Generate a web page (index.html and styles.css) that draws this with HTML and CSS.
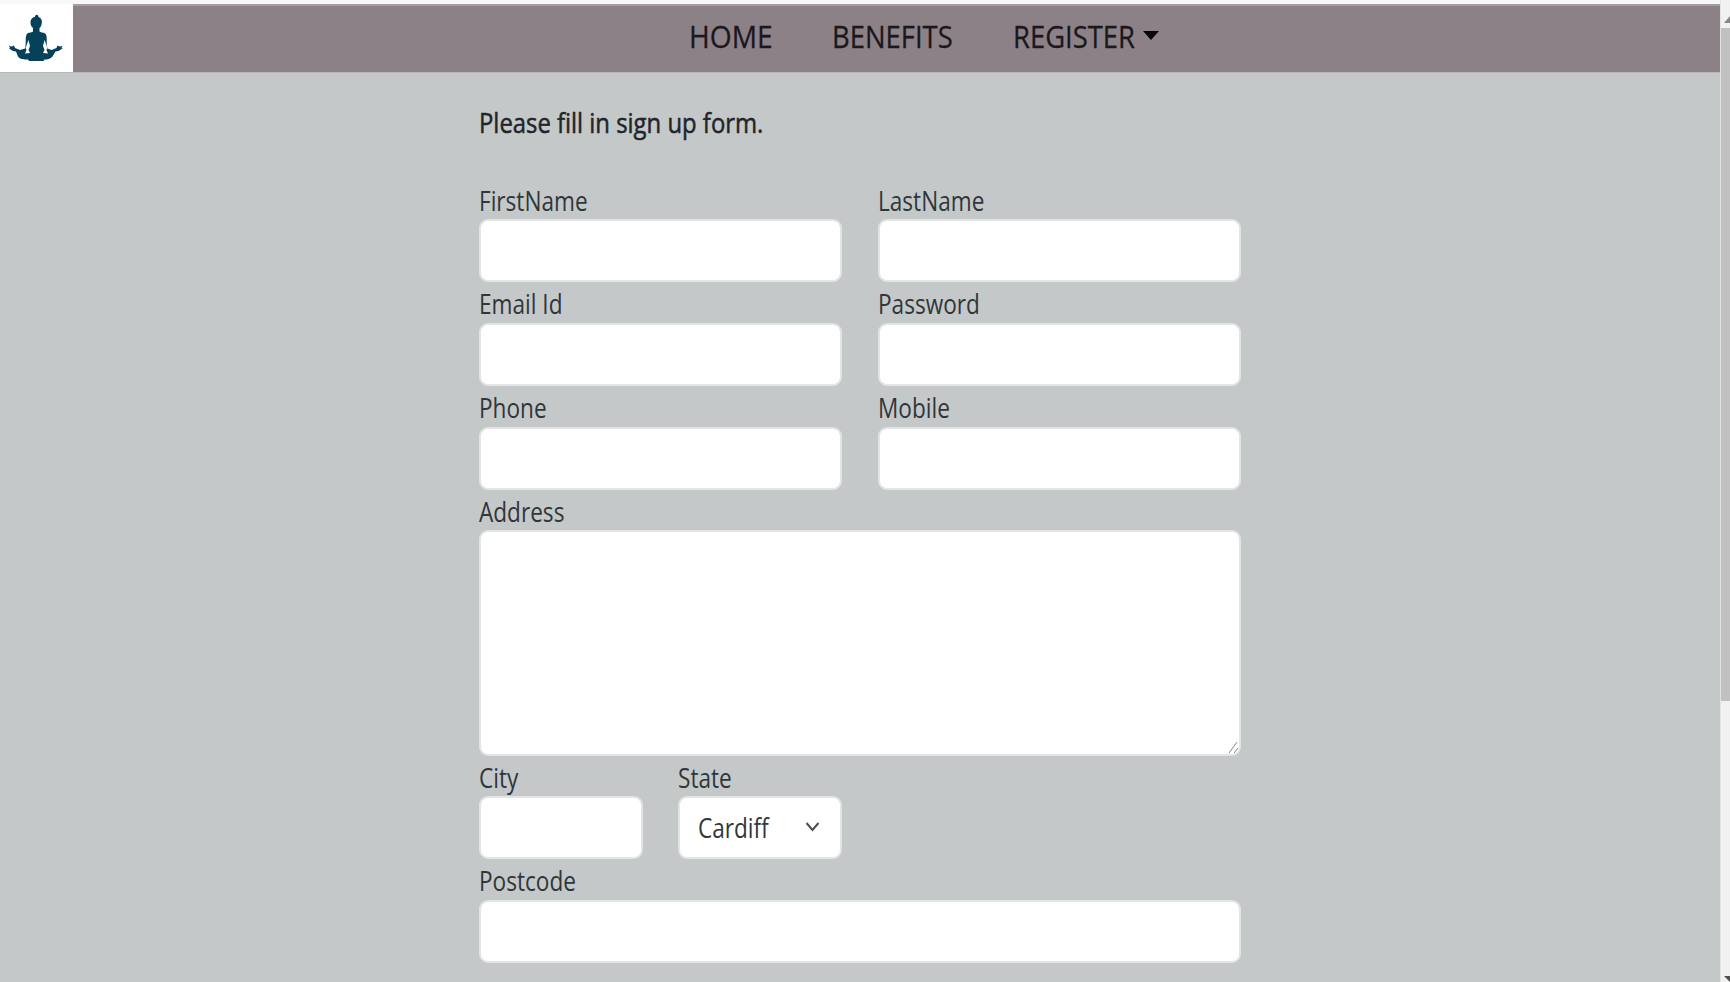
FILE: index.html
```html
<!DOCTYPE html>
<html lang="en">
<head>
<meta charset="utf-8">
<title>Register</title>
<link rel="stylesheet" href="styles.css">
</head>
<body>
<div class="page">
  <header class="navbar">
    <a class="logo"><svg width="73" height="66" viewBox="0 6 73 66" fill="#06415a"><path d="M35 17c0-3 3.500-3 3.500 0 3 1 4 4 3 7.500-.5 2-1 3-2 3.500v3.500c2 1.500 5 .5 6.500 3 1.500 4 0 8 1.500 14l4 1.500 5-2 1-2.500 2 1 3-.5-1 2 1 .5-4 2.500-3 .5-3 5c-2 2.500-5 3-8 3l-1 1.500H29l-1-1.500c-4 0-8 0-10-3l-2-5-3-.5-4-2.500 1-.5-1-2 3 .5 2-1 1 2.500 5 2 5-1.500c1.500-6 0-10 1.500-14 1.500-2.500 4.500-1.500 6.500-3V28c-2-1.500-2.500-3-2.500-6 0-2 1-4 3.500-5z"/><path fill="#fff" d="M28.500 40l1.500 6-1.500 4 1.500 3-5 .5 1.500-3.500-1-2zM44.500 40L43 46l1.500 4-1.500 3 5 .5-1.500-3.500 1-2z"/></svg></a>
    <nav class="links">
      <a class="link home"><span>HOME</span></a>
      <a class="link benefits"><span>BENEFITS</span></a>
      <a class="link register"><span>REGISTER</span><i class="caret"></i></a>
    </nav>
  </header>
  <main class="form">
    <h1 class="title"><span>Please fill in sign up form.</span></h1>
    <label class="field"><span class="label">FirstName</span><input class="box"></label>
    <label class="field"><span class="label">LastName</span><input class="box"></label>
    <label class="field"><span class="label">Email Id</span><input class="box"></label>
    <label class="field"><span class="label">Password</span><input class="box"></label>
    <label class="field"><span class="label">Phone</span><input class="box"></label>
    <label class="field"><span class="label">Mobile</span><input class="box"></label>
    <div class="field wide"><span class="label">Address</span><div class="box area"><svg class="grip" width="11" height="13" viewBox="0 0 11 13" stroke="#888" fill="none"><path d="M1 12L9 1M6 12l4-5"/></svg></div></div>
    <div class="pair">
      <label class="field"><span class="label">City</span><input class="box"></label>
      <div class="field"><span class="label">State</span><div class="box select"><span class="value">Cardiff</span><svg width="15" height="11" viewBox="0 0 15 11" fill="none" stroke="#4a5056" stroke-width="2"><path d="M1.500 1l6 7 6-7"/></svg></div></div>
    </div>
    <label class="field wide"><span class="label">Postcode</span><input class="box"></label>
  </main>
</div>
<div class="scroll"><svg class="up" width="9" height="24"><path d="M3 19l6-7v7z" fill="#888"/></svg><div class="thumb"></div><svg width="9" height="7"><path d="M3 1h6v6z" fill="#505050"/></svg></div>
</body>
</html>
```
FILE: styles.css
```css
* { box-sizing: border-box; }
body { margin: 0; width: 1730px; height: 982px; overflow: hidden; display: flex; background: #c4c8c9; font-family: "Open Sans", "Noto Sans", sans-serif; color: #30363a; }
.page { width: 1720px; border-top: 4px solid #f8f8f8; }
.navbar { display: flex; height: 69px; background: #8d8188; border-top: 2px solid #a69da2; border-bottom: 1px solid #b9b7ba; }
.logo { width: 73px; margin-top: -2px; padding-top: 2px; background: #fff; }
.logo svg { display: block; }
.links { display: flex; padding-left: 616px; color: #1b171b; font-size: 31.5px; line-height: 60px; }
.link { display: flex; align-items: center; height: 60px; white-space: nowrap; -webkit-text-stroke: .3px #1b171b; }
.link span { transform-origin: left center; transform: scaleX(.87); }
.home { width: 143px; }
.home span { transform: scaleX(.895); }
.benefits { width: 181px; }
.register span { width: 130px; }
.caret { border: 8px solid transparent; border-top: 9px solid #080608; border-bottom: 0; margin-top: -1px; }
.form { width: 762px; margin-left: 479px; display: grid; grid-template-columns: 363px 363px; column-gap: 36px; }
.title { grid-column: 1 / 3; height: 105.500px; margin: 0; padding-top: 26px; font-size: 27.500px; line-height: 48px; font-weight: 500; color: #212529; -webkit-text-stroke: .5px #212529; white-space: nowrap; }
.title span, .label, .value { display: block; transform-origin: left center; transform: scaleX(.837); white-space: nowrap; }
.title span { transform: scaleX(.868); }
.field { display: block; min-width: 0; }
.label { height: 40.500px; font-size: 27px; line-height: 43px; }
.box { display: block; width: 100%; height: 63.300px; border: 2px solid #e2e4e5; border-radius: 9px; background: #fff; }
.wide { grid-column: 1 / 3; }
.area { height: 225.200px; display: flex; align-items: flex-end; justify-content: flex-end; }
.pair { display: grid; grid-template-columns: 164px 164px; column-gap: 35px; }
.select { display: flex; align-items: center; padding-left: 18px; }
.value { width: 107px; font-size: 27px; }
.scroll { width: 10px; background: #f1f1f1; border-left: 1px solid #e2e2e2; display: flex; flex-direction: column; }
.scroll svg { display: block; flex-shrink: 0; }
.up { margin-top: 4px; }
.thumb { height: 673px; background: #c1c1c1; margin-bottom: 274px; flex-shrink: 0; }
```
